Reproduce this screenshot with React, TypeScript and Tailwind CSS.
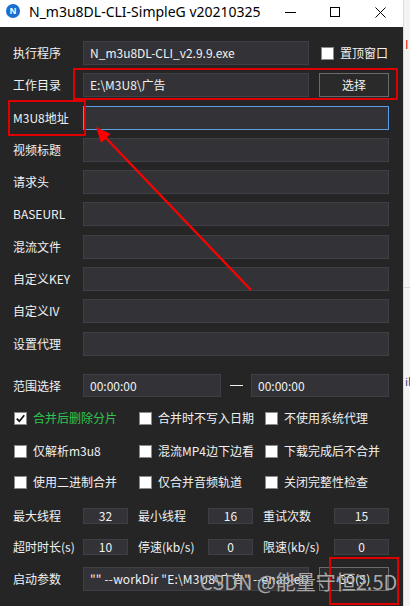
import React from "react";

const FONT = { fontFamily: '"Noto Sans CJK SC", "Noto Sans", sans-serif' };

const inputBase =
  "bg-[#333337] border border-[#3f3f46] text-[#f1f1f1] flex items-center px-[6px] overflow-hidden whitespace-nowrap text-[12px]";

function Label({ children, w = "w-[70px]" }: { children: React.ReactNode; w?: string }) {
  return <div className={`${w} shrink-0 text-[12px] text-[#f1f1f1] whitespace-nowrap`}>{children}</div>;
}

function Check({ checked = false }: { checked?: boolean }) {
  return (
    <div className="w-[13px] h-[13px] bg-white border border-[#8a8a8a] shrink-0 flex items-center justify-center">
      {checked && (
        <svg width="11" height="11" viewBox="0 0 11 11">
          <path d="M1.8 5.6 L4.3 8.2 L9.3 2.2" fill="none" stroke="#111" strokeWidth="1.7" />
        </svg>
      )}
    </div>
  );
}

function CheckItem({ label, checked = false, green = false }: { label: string; checked?: boolean; green?: boolean }) {
  return (
    <div className="flex items-center gap-[6px] ml-[1px]">
      <Check checked={checked} />
      <span className={`text-[12px] whitespace-nowrap ${green ? "text-[#2fc54f]" : "text-[#f1f1f1]"}`}>{label}</span>
    </div>
  );
}

function FieldRow({ label, mt, value = "", focused = false }: { label: string; mt: string; value?: string; focused?: boolean }) {
  return (
    <div className={`flex items-center h-[24px] ${mt}`}>
      <Label>{label}</Label>
      <div
        className={`w-[306px] h-[24px] ${inputBase} ${focused ? "border-[#5a9fe6]" : ""}`}
      >
        {value}
      </div>
    </div>
  );
}

function NumBox({ v, w }: { v: string; w: string }) {
  return (
    <div className={`${w} h-[16px] bg-[#333337] border border-[#3f3f46] text-[#f1f1f1] text-[12px] flex items-center justify-center shrink-0`}>
      {v}
    </div>
  );
}

export default function App() {
  return (
    <div className="w-[410px] h-[606px] flex relative overflow-hidden" style={FONT}>
      {/* window */}
      <div className="w-[403px] h-[606px] flex flex-col bg-[#252526]">
        {/* title bar */}
        <div className="h-[27px] bg-white flex items-start shrink-0 relative">
          <div className="ml-[6px] mt-[4px] w-[14px] h-[14px] rounded-full bg-[#1a6fd0] flex items-center justify-center">
            <span className="text-white text-[9px] font-bold leading-none" style={{ fontFamily: '"Liberation Sans", Arial, sans-serif' }}>N</span>
          </div>
          <div
            className="ml-[9px] mt-[3px] text-[14px] text-black leading-[18px] whitespace-nowrap"
            style={{ fontFamily: '"Noto Sans", "Liberation Sans", sans-serif' }}
          >
            N_m3u8DL-CLI-SimpleG v20210325
          </div>
          <div className="absolute left-[285px] top-[12px] w-[11px] h-[1px] bg-black" />
          <div className="absolute left-[330px] top-[7px] w-[10px] h-[10px] border border-black" />
          <svg className="absolute left-[375px] top-[7px]" width="11" height="11" viewBox="0 0 11 11">
            <path d="M0.5 0.5 L10.5 10.5 M10.5 0.5 L0.5 10.5" stroke="#000" strokeWidth="1" />
          </svg>
        </div>

        {/* content */}
        <div className="flex flex-col pl-[13px] pr-[14px] pt-[14px]">
          {/* row 1 */}
          <div className="flex items-center h-[24px]">
            <Label>执行程序</Label>
            <div className={`w-[226px] h-[24px] ${inputBase}`}>N_m3u8DL-CLI_v2.9.9.exe</div>
            <div className="ml-[12px] flex items-center gap-[6px]">
              <Check />
              <span className="text-[12px] text-[#f1f1f1] whitespace-nowrap">置顶窗口</span>
            </div>
          </div>
          {/* row 2 */}
          <div className="flex items-center h-[24px] mt-[8px]">
            <Label>工作目录</Label>
            <div className={`w-[226px] h-[24px] ${inputBase}`}>E:\M3U8\广告</div>
            <div className="ml-[10px] w-[70px] h-[24px] border border-[#6a6a6a] bg-[#2a2a2b] text-[#f1f1f1] text-[12px] flex items-center justify-center">
              选择
            </div>
          </div>
          <FieldRow label="M3U8地址" mt="mt-[9px]" focused />
          <FieldRow label="视频标题" mt="mt-[8px]" />
          <FieldRow label="请求头" mt="mt-[8px]" />
          <FieldRow label="BASEURL" mt="mt-[8px]" />
          <FieldRow label="混流文件" mt="mt-[9px]" />
          <FieldRow label="自定义KEY" mt="mt-[8px]" />
          <FieldRow label="自定义IV" mt="mt-[8px]" />
          <FieldRow label="设置代理" mt="mt-[9px]" />

          {/* range */}
          <div className="flex items-center h-[23px] mt-[18px]">
            <Label>范围选择</Label>
            <div className={`w-[138px] h-[23px] ${inputBase}`}>00:00:00</div>
            <div className="w-[30px] flex justify-center">
              <div className="w-[13px] h-[1px] bg-[#f1f1f1]" />
            </div>
            <div className={`w-[138px] h-[23px] ${inputBase}`}>00:00:00</div>
          </div>

          {/* checkboxes */}
          <div className="grid grid-cols-[125px_126px_1fr] h-[20px] items-center mt-[11px]">
            <CheckItem label="合并后删除分片" checked green />
            <CheckItem label="合并时不写入日期" />
            <CheckItem label="不使用系统代理" />
          </div>
          <div className="grid grid-cols-[125px_126px_1fr] h-[20px] items-center mt-[13px]">
            <CheckItem label="仅解析m3u8" />
            <CheckItem label="混流MP4边下边看" />
            <CheckItem label="下载完成后不合并" />
          </div>
          <div className="grid grid-cols-[125px_126px_1fr] h-[20px] items-center mt-[11px]">
            <CheckItem label="使用二进制合并" />
            <CheckItem label="仅合并音频轨道" />
            <CheckItem label="关闭完整性检查" />
          </div>

          {/* numbers */}
          <div className="flex items-center h-[16px] mt-[16px]">
            <Label>最大线程</Label>
            <NumBox v="32" w="w-[45px]" />
            <div className="ml-[10px]"><Label>最小线程</Label></div>
            <NumBox v="16" w="w-[45px]" />
            <div className="ml-[10px]"><Label w="w-[71px]">重试次数</Label></div>
            <NumBox v="15" w="w-[55px]" />
          </div>
          <div className="flex items-center h-[16px] mt-[15px]">
            <Label>超时时长(s)</Label>
            <NumBox v="10" w="w-[45px]" />
            <div className="ml-[10px]"><Label>停速(kb/s)</Label></div>
            <NumBox v="0" w="w-[45px]" />
            <div className="ml-[10px]"><Label w="w-[71px]">限速(kb/s)</Label></div>
            <NumBox v="0" w="w-[55px]" />
          </div>

          {/* launch */}
          <div className="flex items-center h-[24px] mt-[12px]">
            <Label>启动参数</Label>
            <div className={`w-[226px] h-[24px] ${inputBase} tracking-[0.15px]`}>"" --workDir "E:\M3U8\广告" --enableDelAfterDone</div>
            <div className="ml-[10px] w-[70px] h-[24px] border border-[#6a6a6a] bg-[#2a2a2b] text-[#f1f1f1] text-[12px] flex items-center justify-center">
              GO(S)
            </div>
          </div>
        </div>
      </div>

      {/* right strip (background behind window) */}
      <div className="flex-1 h-[606px] bg-[#f3f3f3] relative border-l border-[#dcdcdc]">
        <div className="absolute left-[1px] top-[38px] text-[#e01010] text-[12px] leading-none">I</div>
        <div className="absolute left-0 top-[287px] w-full h-[1px] bg-[#d8d8d8]" />
        <div className="absolute left-[1px] top-[376px] text-[#2a4a8a] text-[11px] leading-none">il</div>
      </div>

      {/* annotations */}
      <div className="absolute left-[73px] top-[68px] w-[325px] h-[32px] border-2 border-[#e00000]" />
      <div className="absolute left-[8px] top-[100px] w-[78px] h-[36px] border-2 border-[#e00000]" />
      <div className="absolute left-[329px] top-[557px] w-[70px] h-[48px] border-2 border-[#e00000]" />
      <svg className="absolute left-0 top-0 pointer-events-none" width="410" height="606" viewBox="0 0 410 606">
        <line x1="251" y1="290" x2="103" y2="135" stroke="#ff0000" strokeWidth="2.2" />
        <polygon points="96,127 110.5,134 101,143" fill="#ff0000" />
      </svg>

      {/* watermark */}
      <div
        className="absolute left-[200px] top-[568px] text-[20px] text-[#a8a8a8] whitespace-nowrap leading-[28px]"
        style={{ fontFamily: '"Noto Sans CJK SC", "Noto Sans", sans-serif', fontWeight: 400 }}
      >
        CSDN @能量守恒2.5D
      </div>
    </div>
  );
}
